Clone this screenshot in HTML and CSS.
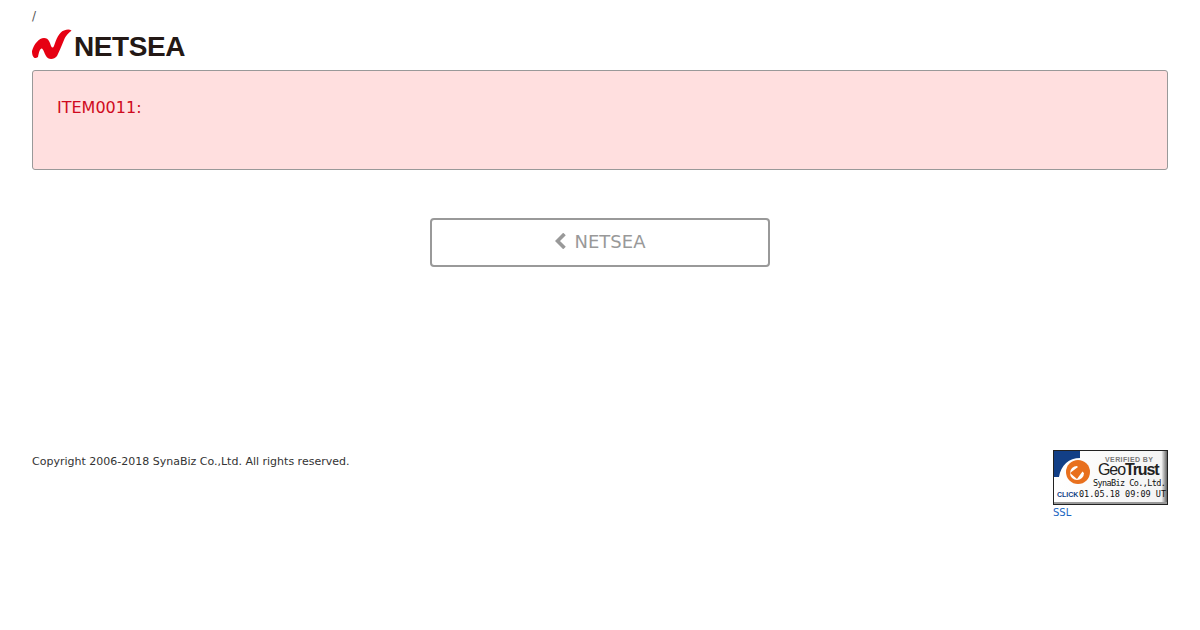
FILE: index.html
```html
<!DOCTYPE html>
<html lang="ja">
<head>
  <meta charset="UTF-8" />
  <title>NETSEA</title>
  <link rel="stylesheet" href="styles.css">
</head>
<body>
  <div class="crumb">/</div>
  <a class="logo" href="#">
    <svg class="logo-mark" width="40" height="30" viewBox="0 0 40 30">
      <path d="M0 22C2 15 7 9 12 9C17 9 18 14 19 17C20 19 21 19 22 17C24 11 27 3 32 1.500C35 0.500 37 0 39.500 1.500C37 4 34 6 32 11C29 18 27 23 25 27C22 31 16 31 14 27C12 24 12 21 10 19.500C8 19 7 23 6 28C2 31 0 27 0 22Z" fill="#e60012"/>
    </svg>
    <span class="logo-text">NETSEA</span>
  </a>

  <div class="alert">ITEM0011:</div>

  <div class="back">
    <a class="back-button" href="#">
      <svg class="chevron" width="12" height="16" viewBox="0 0 12 16">
        <path d="M9.500 1L2.500 8L9.500 15" fill="none" stroke="#999" stroke-width="3.600"/>
      </svg>
      NETSEA
    </a>
  </div>

  <footer class="footer">
    <div class="copyright">Copyright 2006-2018 SynaBiz Co.,Ltd. All rights reserved.</div>
    <div class="seal">
      <div class="seal-badge">
        <svg class="seal-art" width="113" height="53" viewBox="0 0 113 53">
          <defs>
            <linearGradient id="sealBg" x1="0" y1="0" x2="1" y2="0">
              <stop offset="0" stop-color="#ffffff"/>
              <stop offset="0.95" stop-color="#f4f4f4"/>
              <stop offset="1" stop-color="#666666"/>
            </linearGradient>
          </defs>
          <rect width="113" height="53" fill="url(#sealBg)"/>
          <rect y="51" width="113" height="2" fill="#999"/>
          <path d="M0 0H26V7C15 7 7 14 5 26H0Z" fill="#123f86"/>
          <circle cx="24" cy="21" r="12" fill="#e8701e"/>
          <circle cx="23" cy="22" r="7" fill="#fff"/>
          <path d="M21 13H32V24L28.500 20.500L23 28L16 22L24 16Z" fill="#e8701e"/>
        </svg>
        <span class="seal-verified">VERIFIED BY</span>
        <span class="seal-brand">Geo<b>Trust</b></span>
        <span class="seal-name">SynaBiz Co.,Ltd.</span>
        <span class="seal-click">CLICK</span>
        <span class="seal-date">01.05.18 09:09 UT</span>
      </div>
      <a class="seal-link" href="#">SSL</a>
    </div>
  </footer>
</body>
</html>
```

FILE: styles.css
```css
body {
  margin: 0;
  padding: 9px 32px 0;
  font-family: "DejaVu Sans", sans-serif;
  background-color: #fff;
  color: #333;
}

.crumb {
  font-size: 12px;
  line-height: 14px;
  color: #555;
}

.logo {
  display: flex;
  align-items: center;
  gap: 2px;
  height: 34px;
  margin-top: 4px;
  margin-bottom: 9px;
  text-decoration: none;
}

.logo-text {
  font-family: "Liberation Sans", sans-serif;
  font-size: 28px;
  font-weight: bold;
  letter-spacing: -0.4px;
  color: #231815;
  margin-top: 5px;
}

.alert {
  height: 98px;
  border: 1px solid #999;
  border-radius: 3px;
  background-color: #ffdfdf;
  color: #cf0a20;
  font-size: 16px;
  line-height: 20px;
  padding: 0 24px;
}

.alert::before {
  content: "";
  display: block;
  height: 27px;
}

.back {
  display: flex;
  justify-content: center;
  margin-top: 48px;
}

.back-button {
  width: 340px;
  height: 49px;
  box-sizing: border-box;
  border: 2px solid #999;
  border-radius: 4px;
  display: flex;
  align-items: center;
  justify-content: center;
  gap: 8px;
  padding-bottom: 3px;
  color: #999;
  font-size: 18px;
  text-decoration: none;
}

.footer {
  display: flex;
  justify-content: space-between;
  align-items: flex-start;
  margin-top: 183px;
}

.copyright {
  font-size: 11px;
  line-height: 22px;
  margin-top: 1px;
  color: #333;
}

.seal {
  width: 115px;
}

.seal-badge {
  position: relative;
  width: 113px;
  height: 53px;
  border: 1px solid #222;
  overflow: hidden;
}

.seal-art {
  display: block;
}

.seal-badge span {
  position: absolute;
  white-space: nowrap;
}

.seal-verified {
  left: 51px;
  top: 5px;
  font-family: "Liberation Sans", sans-serif;
  font-size: 7px;
  font-weight: bold;
  letter-spacing: 0.4px;
  color: #777;
}

.seal-brand {
  left: 44px;
  top: 10px;
  font-family: "Liberation Sans", sans-serif;
  font-size: 16px;
  letter-spacing: -1.100px;
  color: #222;
}

.seal-name {
  left: 39px;
  top: 27px;
  font-family: "DejaVu Sans Mono", monospace;
  font-size: 8.500px;
  letter-spacing: -0.6px;
  color: #111;
}

.seal-click {
  left: 3px;
  top: 40px;
  font-family: "Liberation Sans", sans-serif;
  font-size: 7px;
  font-weight: bold;
  color: #123f86;
}

.seal-date {
  left: 25px;
  top: 38px;
  font-family: "DejaVu Sans Mono", monospace;
  font-size: 8.500px;
  color: #111;
}

.seal-link {
  display: block;
  font-size: 10px;
  line-height: 14px;
  margin-top: 1px;
  color: #1a66c2;
  text-decoration: none;
}
```
